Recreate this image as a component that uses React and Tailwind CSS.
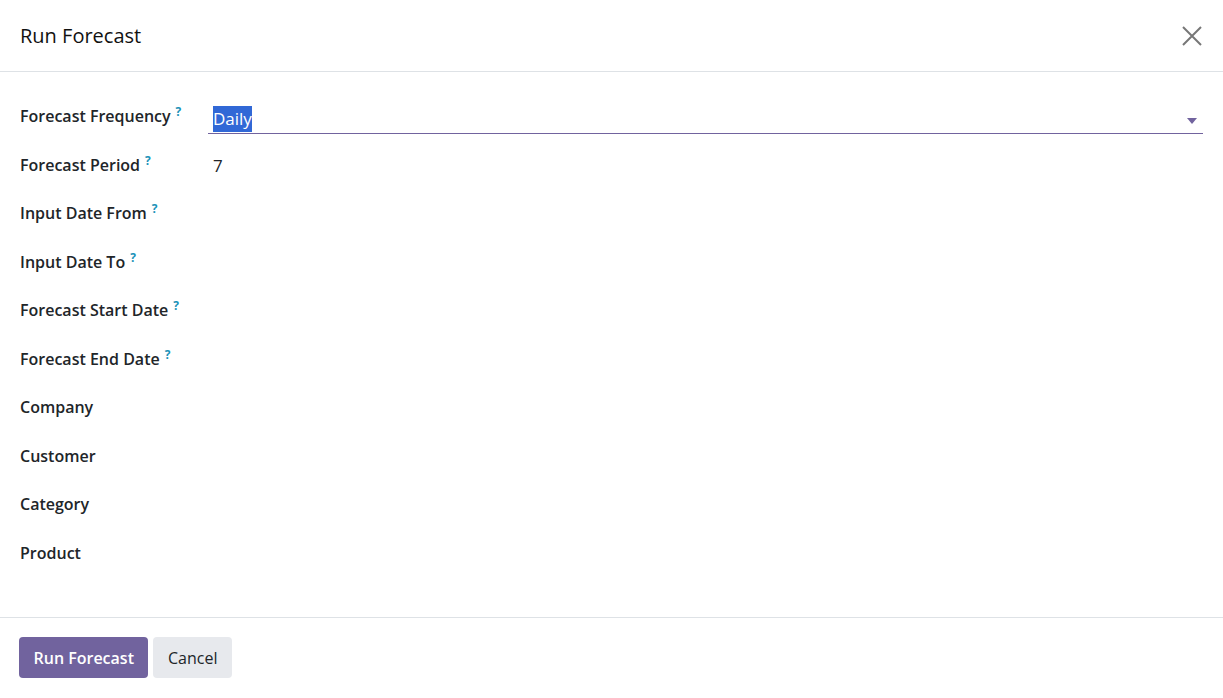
import React from 'react';

const fields = [
    { label: 'Forecast Frequency', help: true },
    { label: 'Forecast Period', help: true },
    { label: 'Input Date From', help: true },
    { label: 'Input Date To', help: true },
    { label: 'Forecast Start Date', help: true },
    { label: 'Forecast End Date', help: true },
    { label: 'Company' },
    { label: 'Customer' },
    { label: 'Category' },
    { label: 'Product' },
];

const FieldValue = ({ index }) => {
    if (index === 0) {
        return (
            <div className="flex-1 flex items-center border-b border-[#71639e] h-[38px] pt-[8px] pl-[5px] pr-[6px]">
                <span className="bg-[#3168d6] text-white leading-[26px] text-[17px]">Daily</span>
                <span className="flex-1" />
                <svg width="10" height="6" viewBox="0 0 10 6" className="mt-[4px]">
                    <path d="M0 0h10L5 6z" fill="#71639e" />
                </svg>
            </div>
        );
    }
    if (index === 1) {
        return <div className="flex-1 pl-[5px] pt-[9px] text-[17px] leading-[24px] text-[#212529]">7</div>;
    }
    return <div className="flex-1" />;
};

export default function App() {
    return (
        <div className="w-[1223px] h-[698px] bg-white flex flex-col text-[#212529]"
             style={{ fontFamily: '"Open Sans", "Noto Sans", sans-serif' }}>
            <div className="h-[72px] flex items-center justify-between pl-[20px] pr-[18px] border-b border-[#dee2e6] shrink-0">
                <h2 className="text-[20px] font-medium text-[#111]">Run Forecast</h2>
                <button className="text-[#777] p-[2px]">
                    <svg width="22" height="22" viewBox="0 0 22 22" fill="none" stroke="currentColor" strokeWidth="2">
                        <path d="M2 2l18 18M20 2L2 20" />
                    </svg>
                </button>
            </div>

            <div className="flex-1 pt-[24px] px-[20px]">
                {fields.map((f, i) => (
                    <div key={f.label} className="flex items-start h-[48.5px]">
                        <div className="w-[188px] shrink-0 text-[16px] font-semibold leading-[24px] pt-[8px]">
                            {f.label}
                            {f.help && <sup className="text-[#1b92b8] text-[12px] font-bold ml-[5px]">?</sup>}
                        </div>
                        <FieldValue index={i} />
                    </div>
                ))}
            </div>

            <div className="h-[81px] border-t border-[#dee2e6] flex items-start gap-[5px] pl-[19px] pt-[19px] shrink-0">
                <button className="h-[41px] px-[14.5px] rounded-[4px] bg-[#71639e] text-white text-[16px] font-semibold">
                    Run Forecast
                </button>
                <button className="h-[41px] px-[14.5px] rounded-[4px] bg-[#e7e9ed] text-[#212529] text-[16px] font-medium">
                    Cancel
                </button>
            </div>
        </div>
    );
}
